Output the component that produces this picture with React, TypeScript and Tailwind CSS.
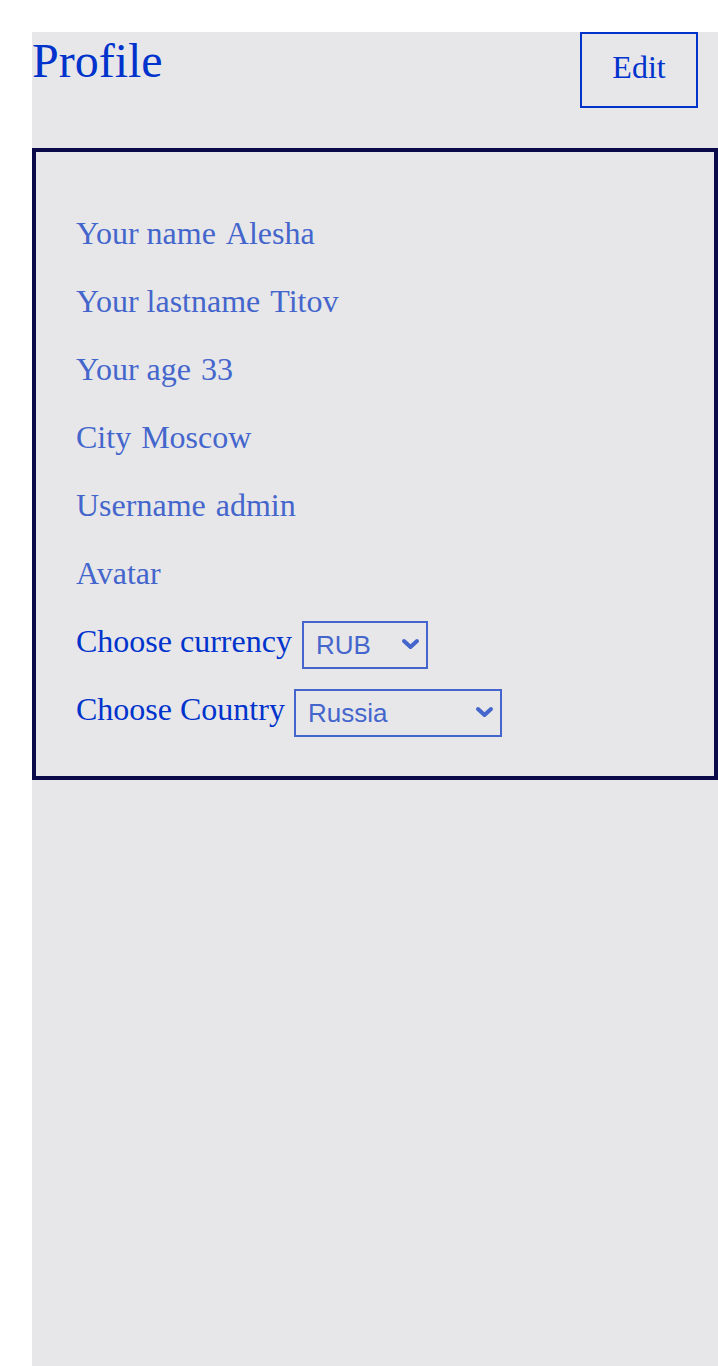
import React from "react";

function Chevron() {
  return (
    <svg width="19" height="12" viewBox="0 0 19 12" className="pointer-events-none absolute right-[8px] top-1/2 -translate-y-1/2">
      <path d="M3 3 L9.5 9 L16 3" fill="none" stroke="#4466cc" strokeWidth="4" strokeLinecap="round" strokeLinejoin="round" />
    </svg>
  );
}

function Select({ value, options, width }: { value: string; options: string[]; width: string }) {
  return (
    <div className={`relative ${width}`}>
      <select
        defaultValue={value}
        className="h-[48px] w-full appearance-none border-2 border-[#4466cc] bg-transparent pl-[12px] text-[26px] text-[#4466cc] outline-none"
        style={{ fontFamily: '"Liberation Sans", Arial, sans-serif' }}
      >
        {options.map((o) => (
          <option key={o}>{o}</option>
        ))}
      </select>
      <Chevron />
    </div>
  );
}

export default function App() {
  const rows: [string, string][] = [
    ["Your name", "Alesha"],
    ["Your lastname", "Titov"],
    ["Your age", "33"],
    ["City", "Moscow"],
    ["Username", "admin"],
    ["Avatar", ""],
  ];
  return (
    <div className="min-h-[1366px] bg-white pl-[32px] pt-[32px]" style={{ fontFamily: '"Liberation Serif", "Times New Roman", serif' }}>
      <div className="min-h-[1334px] bg-[#e7e7ea]">
        <div className="flex items-start justify-between pr-[20px]">
          <h1 className="text-[48px] leading-[58px] text-[#0033cc]">Profile</h1>
          <button className="h-[76px] w-[118px] border-2 border-[#0033cc] pb-[6px] text-[32px] text-[#0033cc]">Edit</button>
        </div>
        <div className="mt-[40px] flex flex-col gap-[20px] border-4 border-[#0a0a4a] px-[40px] pb-[40px] pt-[60px]">
          {rows.map(([l, v]) => (
            <div key={l} className="flex h-[48px] items-center gap-[10px] text-[32px] text-[#4466cc]">
              <span className="mb-[6px]">{l}</span>
              {v && <span className="mb-[6px]">{v}</span>}
            </div>
          ))}
          <div className="flex h-[48px] items-center gap-[10px] text-[32px] text-[#0033cc]">
            <span className="mb-[6px]">Choose currency</span>
            <Select value="RUB" options={["RUB", "USD", "EUR"]} width="w-[126px]" />
          </div>
          <div className="flex h-[48px] items-center gap-[9px] text-[32px] text-[#0033cc]">
            <span className="mb-[6px]">Choose Country</span>
            <Select value="Russia" options={["Russia", "Belarus", "Ukraine", "Kazakhstan", "Armenia"]} width="w-[208px]" />
          </div>
        </div>
      </div>
    </div>
  );
}
